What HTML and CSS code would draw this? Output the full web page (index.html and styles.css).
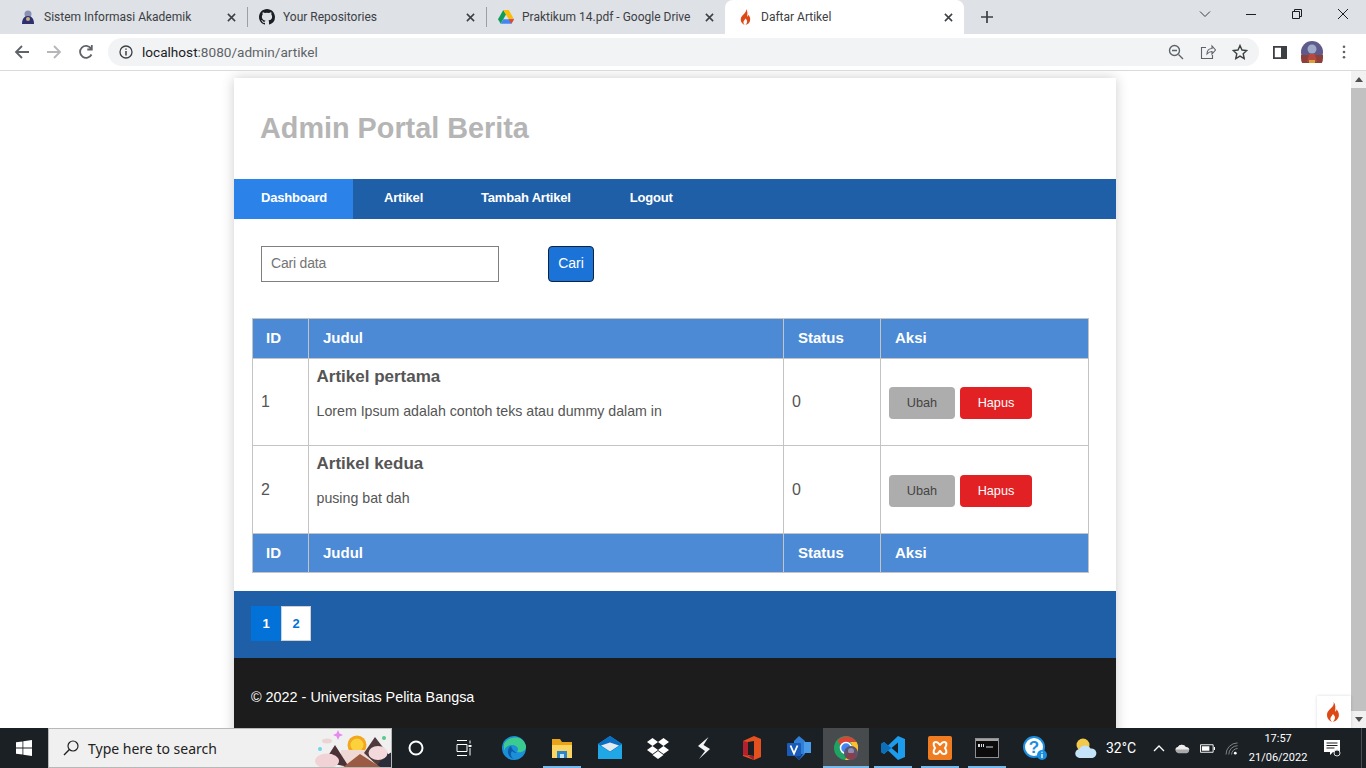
FILE: index.html
```html
<!DOCTYPE html>
<html lang="en">
<head>
  <meta charset="UTF-8" />
  <title>Daftar Artikel</title>
  <link rel="stylesheet" href="styles.css">
</head>
<body>
  <svg class="defs" width="0" height="0">
    <symbol id="flame" viewBox="0 0 16 20"><path fill="#dd4814" d="M8.600 0c.6 2.600-.6 4-2 5.600C4.800 7.600 2 9.600 2 13c0 3.400 2.500 6 5.200 7-1.500-1.200-2.200-2.700-1.600-4.300.5-1.400 1.800-2.100 2.300-3.700 1.300 1 2.500 2.800 2 4.600-.3 1.300-1 2.400-2 3.400 3.200-.8 6-3.400 6-7 0-2.500-1.200-4.400-2.300-5.800-.1 1.200-.6 2-1.500 2.500C10.600 6 10.800 2.500 8.600 0z"/></symbol>
    <symbol id="close" viewBox="0 0 10 10"><path d="M1 1l8 8M9 1l-8 8" fill="none" stroke="#3c4043" stroke-width="1.700"/></symbol>
  </svg>

  <div class="tabstrip">
    <div class="tab">
      <svg class="fav" viewBox="0 0 16 16"><circle cx="8" cy="5" r="3.500" fill="#8a8fb5"/><path d="M2 15c0-5 2-8 6-8s6 3 6 8z" fill="#2c2f70"/><circle cx="8" cy="10" r="2" fill="#c9b27a"/></svg>
      <span class="tab-title">Sistem Informasi Akademik</span>
      <svg class="tab-x"><use href="#close"/></svg>
    </div>
    <div class="tab tab-sep">
      <svg class="fav" viewBox="0 0 16 16"><path fill="#1b1f23" d="M8 0C3.600 0 0 3.600 0 8c0 3.500 2.300 6.500 5.500 7.600.4.100.5-.2.500-.4v-1.400c-2.200.5-2.700-1-2.700-1-.4-.9-.9-1.200-.9-1.200-.7-.5.100-.5.100-.5.800.1 1.200.8 1.200.8.700 1.200 1.900.9 2.300.7.100-.5.300-.9.500-1.100-1.800-.2-3.600-.9-3.600-4 0-.9.300-1.600.8-2.100-.1-.2-.4-1 .1-2.100 0 0 .7-.2 2.200.8a7.600 7.600 0 0 1 4 0c1.500-1 2.200-.8 2.200-.8.400 1.100.2 1.900.1 2.100.5.600.8 1.300.8 2.100 0 3.100-1.900 3.700-3.700 3.900.3.300.6.800.6 1.500v2.200c0 .2.100.5.600.4A8 8 0 0 0 16 8c0-4.400-3.600-8-8-8z"/></svg>
      <span class="tab-title">Your Repositories</span>
      <svg class="tab-x"><use href="#close"/></svg>
    </div>
    <div class="tab tab-sep">
      <svg class="fav" viewBox="0 0 16 14"><path fill="#0f9d58" d="M5.300 0L0 9.200l2.700 4.600L8 4.600z"/><path fill="#fbbc04" d="M5.300 0h5.400L16 9.200h-5.300z"/><path fill="#4285f4" d="M16 9.200l-2.700 4.600H2.700l2.600-4.600z"/><path fill="#ea4335" d="M13.300 13.800L10.700 9.200H16z"/></svg>
      <span class="tab-title">Praktikum 14.pdf - Google Drive</span>
      <svg class="tab-x"><use href="#close"/></svg>
    </div>
    <div class="tab tab-active">
      <svg class="fav fav-flame"><use href="#flame"/></svg>
      <span class="tab-title">Daftar Artikel</span>
      <svg class="tab-x"><use href="#close"/></svg>
    </div>
    <svg class="new-tab" viewBox="0 0 12 12"><path d="M6 0v12M0 6h12" stroke="#3c4043" stroke-width="1.700"/></svg>
    <div class="win-controls">
      <svg viewBox="0 0 12 12"><path d="M1 3.500l5 5 5-5" fill="none" stroke="#3c4043"/></svg>
      <svg viewBox="0 0 12 12"><path d="M1 6.500h10" stroke="#1b1f23"/></svg>
      <svg viewBox="0 0 12 12"><path d="M1.500 3.500h7v7h-7zM3.500 3.500v-2h7v7h-2" fill="none" stroke="#1b1f23"/></svg>
      <svg viewBox="0 0 12 12"><path d="M1 1l10 10M11 1L1 11" stroke="#1b1f23"/></svg>
    </div>
  </div>

  <div class="toolbar">
    <svg class="nav-icon" viewBox="0 0 16 16"><path d="M15 8H2M8 2L2 8l6 6" fill="none" stroke="#5f6368" stroke-width="1.800"/></svg>
    <svg class="nav-icon" viewBox="0 0 16 16"><path d="M1 8h13M8 2l6 6-6 6" fill="none" stroke="#b4b6b9" stroke-width="1.800"/></svg>
    <svg class="nav-icon" viewBox="0 0 16 16"><path d="M13.500 10.500A6 6 0 1 1 13 4.500M13.800 1v4.500H9.300" fill="none" stroke="#5f6368" stroke-width="1.800"/></svg>
    <div class="omnibox">
      <svg class="info" viewBox="0 0 14 14"><circle cx="7" cy="7" r="6" fill="none" stroke="#3c4043" stroke-width="1.300"/><path d="M7 6v4.500M7 3.500v1.300" stroke="#3c4043" stroke-width="1.500"/></svg>
      <span class="url"><b>localhost</b>:8080/admin/artikel</span>
      <svg class="omni-icon omni-zoom" viewBox="0 0 16 16"><circle cx="6.500" cy="6.500" r="5" fill="none" stroke="#5f6368" stroke-width="1.400"/><path d="M10.500 10.500L15 15M4 6.500h5" stroke="#5f6368" stroke-width="1.400"/></svg>
      <svg class="omni-icon" viewBox="0 0 16 16"><path d="M6 3.500H1.500v11h11V11M7 10c0-3.500 2-5.500 5-5.500V2l3.500 4-3.500 4V7.500c-2 0-3.500.8-5 2.500z" fill="none" stroke="#5f6368" stroke-width="1.100"/></svg>
      <svg class="omni-icon" viewBox="0 0 16 16"><path d="M8 1.500l2 4.500 4.800.5-3.600 3.200 1 4.800L8 12.100 3.800 14.500l1-4.800L1.200 6.500 6 6z" fill="none" stroke="#3c4043" stroke-width="1.400"/></svg>
    </div>
    <svg class="side-panel" viewBox="0 0 14 13"><path d="M.9.900h12.200v11.200H.9z" fill="none" stroke="#3c4043" stroke-width="1.800"/><path d="M8 1h5v11H8z" fill="#3c4043"/></svg>
    <svg class="avatar" viewBox="0 0 22 22"><circle cx="11" cy="11" r="11" fill="#5f5a8c"/><path d="M0 14h22v3a11 11 0 0 1-22 0z" fill="#8d3f3a"/><circle cx="11" cy="8" r="4.500" fill="#9fa9c8"/><path d="M6 21l2-8h6l2 8z" fill="#b5483f"/><path d="M8 19h6v3H8z" fill="#d9a13b"/></svg>
    <svg class="kebab" viewBox="0 0 4 16"><circle cx="2" cy="2" r="1.500" fill="#5f6368"/><circle cx="2" cy="8" r="1.500" fill="#5f6368"/><circle cx="2" cy="14" r="1.500" fill="#5f6368"/></svg>
  </div>

  <div class="viewport">
    <div class="page">
      <div class="container">
        <header class="site-header">
          <h1>Admin Portal Berita</h1>
        </header>
        <nav class="main-nav">
          <a href="#" class="active">Dashboard</a>
          <a href="#">Artikel</a>
          <a href="#">Tambah Artikel</a>
          <a href="#">Logout</a>
        </nav>
        <section class="content">
          <form class="search">
            <input type="text" placeholder="Cari data">
            <button type="button">Cari</button>
          </form>
          <table class="data">
            <thead>
              <tr><th class="col-id">ID</th><th class="col-title">Judul</th><th class="col-status">Status</th><th>Aksi</th></tr>
            </thead>
            <tbody>
              <tr class="row-one">
                <td>1</td>
                <td class="cell-title"><b>Artikel pertama</b><p>Lorem Ipsum adalah contoh teks atau dummy dalam in</p></td>
                <td>0</td>
                <td class="cell-actions"><a href="#" class="btn btn-edit">Ubah</a><a href="#" class="btn btn-del">Hapus</a></td>
              </tr>
              <tr class="row-two">
                <td>2</td>
                <td class="cell-title"><b>Artikel kedua</b><p>pusing bat dah</p></td>
                <td>0</td>
                <td class="cell-actions"><a href="#" class="btn btn-edit">Ubah</a><a href="#" class="btn btn-del">Hapus</a></td>
              </tr>
            </tbody>
            <tfoot>
              <tr><th class="col-id">ID</th><th>Judul</th><th>Status</th><th>Aksi</th></tr>
            </tfoot>
          </table>
        </section>
        <div class="pager-bar">
          <a href="#" class="page-link current">1</a><a href="#" class="page-link">2</a>
        </div>
        <footer class="site-footer">© 2022 - Universitas Pelita Bangsa</footer>
      </div>
    </div>
    <div class="scrollbar">
      <svg class="arrow" viewBox="0 0 8 5"><path d="M4 0l4 5H0z" fill="#505050"/></svg>
      <div class="thumb"></div>
      <svg class="arrow" viewBox="0 0 8 5"><path d="M0 0h8L4 5z" fill="#505050"/></svg>
    </div>
    <div class="ci-badge"><svg><use href="#flame"/></svg></div>
  </div>

  <div class="taskbar">
    <div class="start">
      <svg viewBox="0 0 16 16"><path fill="#fff" d="M0 2.300l6.500-.9v6.200H0zM7.300 1.300L16 0v7.600H7.300zM0 8.400h6.500v6.200L0 13.700zM7.300 8.400H16V16l-8.700-1.200z"/></svg>
    </div>
    <div class="search-box">
      <svg viewBox="0 0 16 16"><circle cx="10" cy="6" r="5" fill="none" stroke="#222" stroke-width="1.200"/><path d="M6.400 9.600L1 15" stroke="#222" stroke-width="1.400"/></svg>
      <span>Type here to search</span>
      <svg class="search-art" viewBox="0 0 78 40">
        <circle cx="43" cy="17" r="9.500" fill="#f2a71e"/>
        <circle cx="43" cy="17" r="6.500" fill="#fbd23c"/>
        <path d="M24 2l1.500 3.500L29 7l-3.500 1.500L24 12l-1.500-3.500L19 7l3.500-1.500z" fill="#e58af0"/>
        <circle cx="70" cy="10" r="2" fill="#58c98b"/>
        <circle cx="6" cy="21" r="2" fill="#6fd5e8"/>
        <ellipse cx="13" cy="13" rx="5" ry="2.500" fill="#edd4d4"/>
        <path d="M27 22h28v18H27z" fill="#f0d8d4"/>
        <path d="M10 34l11-17 14 22z" fill="#4a3236"/>
        <path d="M50 25l11-16 17 22v9H66z" fill="#4f3a3c"/>
        <path d="M68 30l10-6v16H62z" fill="#2b2c3a"/>
        <ellipse cx="13" cy="33" rx="12" ry="7.500" fill="#f1d3d6"/>
        <ellipse cx="64" cy="25" rx="9.500" ry="7" fill="#f4d9dc"/>
        <path d="M28 40l18-14 22 14z" fill="#9a5a44"/>
      </svg>
    </div>
    <div class="task-icons">
      <div class="ti"><svg viewBox="0 0 16 16"><circle cx="8" cy="8" r="6.500" fill="none" stroke="#fff" stroke-width="2"/></svg></div>
      <div class="ti"><svg viewBox="0 0 16 16"><path d="M1 .5h10M1 15.500h10M1 4.500h10v7H1zM14 .5v3M14 8v7.500" fill="none" stroke="#fff"/><path d="M12.500 5h3v2h-3z" fill="#fff"/></svg></div>
      <div class="ti"><svg class="big" viewBox="0 0 24 24"><circle cx="12" cy="12" r="12" fill="#1b8fd8"/><path d="M2 8C6 0 21-2 24 10c.5 5-5 7-9 6 3-4-1-7-5-7-4 0-7 2-8 6z" fill="#3ccb8e"/><path d="M9 10c-5 3-4 11 3 13-3-2-4-5-2-8 1 1 3 2 5 2-2-1-5-3-6-7z" fill="#0c5ca8"/></svg></div>
      <div class="ti ti-open"><svg class="big" viewBox="0 0 24 24"><path d="M2 3h8l2 3h10v16H2z" fill="#e9a31a"/><path d="M2 9h20v13H2z" fill="#fcd462"/><path d="M7 15h10v7H7z" fill="#2a86c9"/><path d="M10 18h4v4h-4z" fill="#bfe3f5"/></svg></div>
      <div class="ti"><svg class="big" viewBox="0 0 24 24"><path d="M12 0l12 8v15H0V8z" fill="#20a8e6"/><path d="M0 8l12-8 12 8-12 8z" fill="#0b6ec2"/><path d="M3 9.500l9-3 9 3-9 6z" fill="#e4ebf0"/></svg></div>
      <div class="ti"><svg class="big" viewBox="0 0 24 24"><path fill="#fff" d="M6.500 2L1 6l5.500 4L12 6zM17.500 2L12 6l5.500 4L23 6zM1 14l5.500 4L12 14l-5.500-4zM12 14l5.500 4L23 14l-5.500-4zM6.500 19l5.500 4 5.500-4-5.500-4z"/></svg></div>
      <div class="ti"><svg class="big" viewBox="0 0 24 24"><path d="M16.500 1L6 10l7 5-6 8 11-10-6.500-4z" fill="#f4f4f4"/></svg></div>
      <div class="ti"><svg class="big" viewBox="0 0 24 24"><path d="M3 5l11-5 7 3v18l-7 3-11-4z" fill="#e5501f"/><path d="M3 5l5 1v14l-5-1z" fill="#b3202f"/><path d="M8 20l6 4 0-4z" fill="#a1202f"/><path d="M8 6l6-1v15l-6-1z" fill="#1b1f23"/></svg></div>
      <div class="ti"><svg class="big" viewBox="0 0 24 24"><path d="M12 0l6 5v13l-6 6-5-5V5z" fill="#2f7fd6"/><path d="M17 6h7v11h-7z" fill="#4a9be8"/><path d="M7 18h9l-4 6z" fill="#123f8a"/><rect y="7" width="14" height="13" rx="1" fill="#1a5ab8"/><path d="M3.500 9.500l3.500 8 3.500-8" fill="none" stroke="#fff" stroke-width="1.800"/></svg></div>
      <div class="ti ti-open ti-current"><svg class="big" viewBox="0 0 24 24"><circle cx="12" cy="12" r="12" fill="#1ea362"/><path d="M3.500 4.500A12 12 0 0 1 22.500 6H12a6 6 0 0 0-5.500 3.500z" fill="#db4437"/><path d="M22.500 6A12 12 0 0 1 11 24l5.500-9a6 6 0 0 0-.5-9z" fill="#fbc02d"/><circle cx="12" cy="12" r="5.500" fill="#4285f4" stroke="#fff" stroke-width="1.500"/><circle cx="17" cy="17" r="7" fill="#5d5270"/><circle cx="17" cy="15" r="3" fill="#8a8db0"/><path d="M12 21l2-4h6l2 3-4 4z" fill="#8a3f4a"/></svg></div>
      <div class="ti ti-open"><svg class="big" viewBox="0 0 24 24"><path fill-rule="evenodd" d="M17 0l7 3v18l-7 3L7 14.500 3 18 0 16V8l3-2 4 3.500zM17 6.500L10.500 12l6.500 5.500z" fill="#1c9cec"/><path d="M7 9.500l3.500 2.500L7 14.500 3 18 0 16V8l3-2z" fill="#0d6fb8"/></svg></div>
      <div class="ti ti-open"><svg class="big" viewBox="0 0 24 24"><rect width="24" height="24" rx="2" fill="#f07c22"/><path d="M8 6c3 0 3 3 4 3s1-3 4-3 3 3 1 6c2 3 2 6-1 6s-3-3-4-3-1 3-4 3-3-3-1-6c-2-3-2-6 1-6z" fill="none" stroke="#fff" stroke-width="2"/></svg></div>
      <div class="ti ti-open"><svg class="big" viewBox="0 0 24 24"><rect x=".5" y="2.500" width="23" height="19" fill="#0c0c0c" stroke="#8f8f8f"/><path d="M1 3h22v2H1z" fill="#a4a4a4"/><path d="M3 8h2v3H3zM6 8h1v3H6zM8 8h1v3H8z" fill="#ddd"/><path d="M11 11h7" stroke="#ddd"/></svg></div>
      <div class="ti"><svg class="big" viewBox="0 0 24 24"><circle cx="11" cy="11" r="10" fill="#fff" stroke="#1a8fe0" stroke-width="2"/><text class="help-mark" x="11" y="17">?</text><circle cx="19" cy="19" r="5" fill="#1a8fe0"/><path d="M19 18v4M19 15.800v1" stroke="#fff" stroke-width="1.300"/></svg></div>
    </div>
    <div class="tray">
      <svg class="weather" viewBox="0 0 22 20"><circle cx="8" cy="7" r="6.500" fill="#f3c94b"/><path d="M5 20a4.500 4.500 0 0 1-.5-9c1-4 9-5 11-.5a4.800 4.800 0 0 1 2 9.500z" fill="#c4e2f8"/></svg>
      <span class="temp">32°C</span>
      <svg class="tray-i chevron" viewBox="0 0 12 8"><path d="M1 7l5-5 5 5" fill="none" stroke="#fff" stroke-width="1.300"/></svg>
      <svg class="tray-i" viewBox="0 0 16 10"><path d="M3.500 10a3.300 3.300 0 0 1-.5-6.500C4.500 0 10 0 11.500 3.500A3.300 3.300 0 0 1 12.500 10z" fill="#a9a9a9"/><path d="M.5 6a3.300 3.300 0 0 1 2.500-2.500C4.500 0 10 0 11.500 3.500 13.500 3.500 15 5 15.500 6z" fill="#ececec"/></svg>
      <svg class="tray-i" viewBox="0 0 16 10"><path d="M.5 1h13.500v8H.5z" fill="none" stroke="#fff"/><path d="M14.800 3.500H16v3h-1.200zM2 2.500h8v5H2z" fill="#fff"/></svg>
      <svg class="tray-i tray-wifi" viewBox="0 0 16 14"><path d="M1 13.500a12.500 12.500 0 0 1 12.500-12.500M4 13.500a9.500 9.500 0 0 1 9.500-9.500M7 13.500a6.500 6.500 0 0 1 6.500-6.500" fill="none" stroke="#8a8a8a"/><circle cx="11" cy="12" r="1.500" fill="#fff"/></svg>
      <div class="clock"><span>17:57</span><span>21/06/2022</span></div>
      <svg class="notif" viewBox="0 0 17 17"><path d="M0 0h16v12H9l-3 3v-3H0z" fill="#fff"/><path d="M2.500 3h11M2.500 5.500h11M2.500 8h8" stroke="#1b1f23"/><circle cx="13" cy="13" r="3" fill="#1b2025" stroke="#ddd"/></svg>
    </div>
  </div>
</body>
</html>
```

FILE: styles.css
```css
* {
  box-sizing: border-box;
}

body {
  margin: 0;
  width: 1366px;
  height: 768px;
  overflow: hidden;
  display: flex;
  flex-direction: column;
  font-family: "Liberation Sans", Arial, sans-serif;
  background: #fff;
}

a {
  text-decoration: none;
}

.defs {
  position: absolute;
}

/* browser tabs */
.tabstrip {
  height: 34px;
  flex: none;
  display: flex;
  align-items: center;
  padding-left: 8px;
  background: #dee1e6;
  font-family: Roboto, "Noto Sans", sans-serif;
  font-size: 12px;
  color: #3c4043;
}

.tab {
  width: 239px;
  height: 34px;
  flex: none;
  display: flex;
  align-items: center;
  padding: 0 10px 0 12px;
  position: relative;
}

.tab-sep::before {
  content: "";
  position: absolute;
  left: 0;
  top: 7px;
  width: 1px;
  height: 20px;
  background: #9aa0a6;
}

.tab-active {
  background: #fff;
  border-radius: 8px 8px 0 0;
  padding-left: 14px;
}

.fav {
  width: 16px;
  height: 16px;
  flex: none;
}

.fav-flame {
  width: 13px;
}

.tab-title {
  margin-left: 8px;
  flex: 1;
  white-space: nowrap;
  overflow: hidden;
}

.tab-active .tab-title {
  margin-left: 9px;
}

.tab-x {
  width: 9px;
  height: 9px;
  flex: none;
  margin-right: 1px;
}

.new-tab {
  width: 12px;
  height: 12px;
  margin-left: 17px;
  flex: none;
}

.win-controls {
  margin-left: auto;
  height: 28px;
  align-self: flex-start;
  display: flex;
  align-items: center;
  gap: 34px;
  padding-right: 17px;
}

.win-controls svg {
  width: 12px;
  height: 12px;
}

/* address bar */
.toolbar {
  height: 37px;
  flex: none;
  display: flex;
  align-items: center;
  padding-left: 14px;
  background: #fff;
  border-bottom: 1px solid #d9dadc;
}

.nav-icon {
  width: 16px;
  height: 16px;
  margin-right: 16px;
  flex: none;
}

.omnibox {
  width: 1151px;
  height: 28px;
  margin-left: -2px;
  border-radius: 14px;
  background: #f1f3f4;
  display: flex;
  align-items: center;
  padding: 0 11px 0 11px;
  flex: none;
}

.info {
  width: 14px;
  height: 14px;
}

.url {
  margin-left: 9px;
  font-family: Roboto, "Noto Sans", sans-serif;
  font-size: 13.600px;
  color: #5f6368;
}

.url b {
  font-weight: 400;
  color: #202124;
}

.omni-icon {
  width: 16px;
  height: 16px;
  margin-left: 16px;
}

.omni-zoom {
  margin-left: auto;
}

.side-panel {
  width: 14px;
  height: 13px;
  margin-left: 14px;
}

.avatar {
  width: 22px;
  height: 22px;
  margin-left: 14px;
}

.kebab {
  width: 4px;
  height: 14px;
  margin-left: 19px;
}

/* page area */
.viewport {
  height: 657px;
  flex: none;
  display: flex;
  position: relative;
  overflow: hidden;
}

.page {
  width: 1351px;
  padding-top: 7px;
  overflow: hidden;
}

.container {
  width: 882px;
  margin-left: 234px;
  background: #fff;
  box-shadow: 0 0 12px rgba(0, 0, 0, 0.2);
}

.site-header {
  height: 101px;
  padding: 32px 26px 0;
}

.site-header h1 {
  margin: 0;
  font-size: 28.800px;
  line-height: 36px;
  color: #b5b5b5;
}

.main-nav {
  height: 40px;
  display: flex;
  background: #1f5fa8;
}

.main-nav a {
  padding: 0 29px;
  line-height: 37px;
  font-size: 13px;
  font-weight: 700;
  letter-spacing: -0.2px;
  color: #fff;
}

.main-nav a.active {
  background: #2b83ea;
  width: 119px;
  padding: 0 0 0 27px;
}

.main-nav a:nth-child(2) {
  padding-left: 31px;
}

.main-nav a:nth-child(4) {
  padding-left: 30px;
}

.content {
  padding: 27px 27px 18px 18px;
}

.search {
  display: flex;
  align-items: flex-start;
  margin: 0 0 36px 9px;
}

.search input {
  width: 238px;
  height: 36px;
  padding: 0 10px 2px 9px;
  border: 1px solid #808080;
  background: #fff;
  font: 14px "Liberation Sans", Arial, sans-serif;
  letter-spacing: -0.2px;
}

.search input::placeholder {
  color: #757575;
}

.search button {
  width: 46px;
  height: 36px;
  margin-left: 49px;
  padding: 0 0 2px;
  border: 1px solid #10233f;
  border-radius: 4px;
  background: #1b73d8;
  color: #fff;
  font: 14px "Liberation Sans", Arial, sans-serif;
}

.data {
  width: 837px;
  table-layout: fixed;
  border-collapse: collapse;
  font-size: 16px;
  color: #555;
}

.data th,
.data td {
  border: 1px solid #c4c4c4;
  padding: 0 8px;
}

.data th {
  height: 39px;
  padding: 0 14px 2px;
  background: #4c8ad5;
  color: #fff;
  font-size: 15px;
  text-align: left;
}

.data thead th {
  height: 40px;
}

.data th.col-id {
  padding-left: 13px;
}

.col-id {
  width: 56px;
}

.col-title {
  width: 475px;
}

.col-status {
  width: 97px;
}

.row-one td {
  height: 87px;
}

.row-two td {
  height: 88px;
}

.cell-title {
  vertical-align: top;
}

.data .cell-title {
  padding: 8px 8px 0 7.500px;
}

.cell-title b {
  display: block;
  font-size: 17px;
  line-height: 19px;
}

.cell-title p {
  margin: 17px 0 0;
  font-size: 14.200px;
  line-height: 17px;
}

.data .cell-actions {
  padding-top: 2px;
}

.btn {
  display: inline-block;
  height: 32px;
  line-height: 33px;
  border-radius: 4px;
  font-size: 12.700px;
  text-align: center;
}

.btn-edit {
  width: 66px;
  margin-right: 5px;
  background: #adadad;
  color: #444;
}

.btn-del {
  width: 72px;
  background: #e22124;
  color: #fff;
}

.pager-bar {
  height: 67px;
  padding: 15px 17px 0;
  display: flex;
  align-items: flex-start;
  background: #1f5fa8;
}

.page-link {
  width: 30px;
  height: 35px;
  line-height: 33px;
  text-align: center;
  background: #fff;
  border: 1px solid #d0d0d0;
  color: #0271d8;
  font-size: 13px;
  font-weight: 700;
}

.page-link.current {
  background: #0271d8;
  border-color: #0271d8;
  color: #fff;
}

.site-footer {
  height: 100px;
  padding: 31px 17px 0;
  background: #1c1c1c;
  color: #fff;
  font-size: 14.400px;
  line-height: 17px;
}

/* scrollbar */
.scrollbar {
  width: 15px;
  flex: none;
  display: flex;
  flex-direction: column;
  align-items: center;
  background: #f1f1f1;
}

.arrow {
  width: 8px;
  height: 5px;
  margin: 6px 0;
  flex: none;
}

.thumb {
  width: 15px;
  flex: 1;
  background: #c1c1c1;
}

.ci-badge {
  position: absolute;
  right: 15px;
  bottom: 0;
  width: 34px;
  height: 32px;
  padding-right: 2px;
  display: flex;
  align-items: center;
  justify-content: center;
  background: #fff;
  box-shadow: 0 0 3px rgba(0, 0, 0, 0.15);
}

.ci-badge svg {
  width: 16px;
  height: 20px;
}

/* windows taskbar */
.taskbar {
  height: 40px;
  flex: none;
  display: flex;
  background: #1b2025;
  color: #fff;
}

.start {
  width: 48px;
  display: flex;
  align-items: center;
  justify-content: center;
}

.start svg {
  width: 16px;
  height: 16px;
}

.search-box {
  width: 344px;
  display: flex;
  align-items: center;
  padding-left: 14px;
  position: relative;
  overflow: hidden;
  background: #f0f0f0;
  border: 1px solid #b8b8b8;
  color: #222;
  font-family: "Noto Sans", "Open Sans", sans-serif;
  font-size: 14px;
}

.search-box > svg:first-child {
  width: 16px;
  height: 16px;
  margin-right: 9px;
}

.search-art {
  position: absolute;
  right: -1px;
  top: -1px;
  width: 78px;
  height: 40px;
}

.task-icons {
  display: grid;
  grid-template-columns: 48px 48px 52px 44px 52px 44px 48px 47px 48px 46px 47px 48px 46px 50px;
}

.ti {
  height: 40px;
  display: flex;
  align-items: center;
  justify-content: center;
  position: relative;
}

.ti svg {
  width: 16px;
  height: 16px;
}

.ti svg.big {
  width: 24px;
  height: 24px;
}

.ti-open::after {
  content: "";
  position: absolute;
  left: 50%;
  bottom: 0;
  width: 38px;
  margin-left: -19px;
  height: 2px;
  background: #76b9ed;
}

.ti-current {
  background: #474b4e;
}

.ti-current::after {
  width: 46px;
  margin-left: -23px;
}

.help-mark {
  font: 700 17px "Liberation Sans", Arial, sans-serif;
  fill: #1a8fe0;
  text-anchor: middle;
}

.tray {
  flex: 1;
  display: flex;
  align-items: center;
  padding-left: 15px;
  position: relative;
  font-family: Roboto, "Noto Sans", sans-serif;
  font-size: 14px;
}

.weather {
  width: 22px;
  height: 20px;
  flex: none;
}

.temp {
  margin-left: 9px;
  margin-right: 17px;
  white-space: nowrap;
}

.tray-i {
  width: 15px;
  height: 11px;
  margin-right: 10px;
  flex: none;
}

.chevron {
  width: 12px;
  height: 8px;
}

.tray-wifi {
  height: 13px;
}

.clock {
  width: 58px;
  display: flex;
  flex-direction: column;
  align-items: center;
  margin-left: -1px;
  font-size: 11px;
  line-height: 19px;
  flex: none;
}

.notif {
  width: 17px;
  height: 17px;
  margin-left: 17px;
  flex: none;
}

.tray::after {
  content: "";
  position: absolute;
  right: 4px;
  top: 0;
  width: 1px;
  height: 40px;
  background: #4a4e52;
}
```
